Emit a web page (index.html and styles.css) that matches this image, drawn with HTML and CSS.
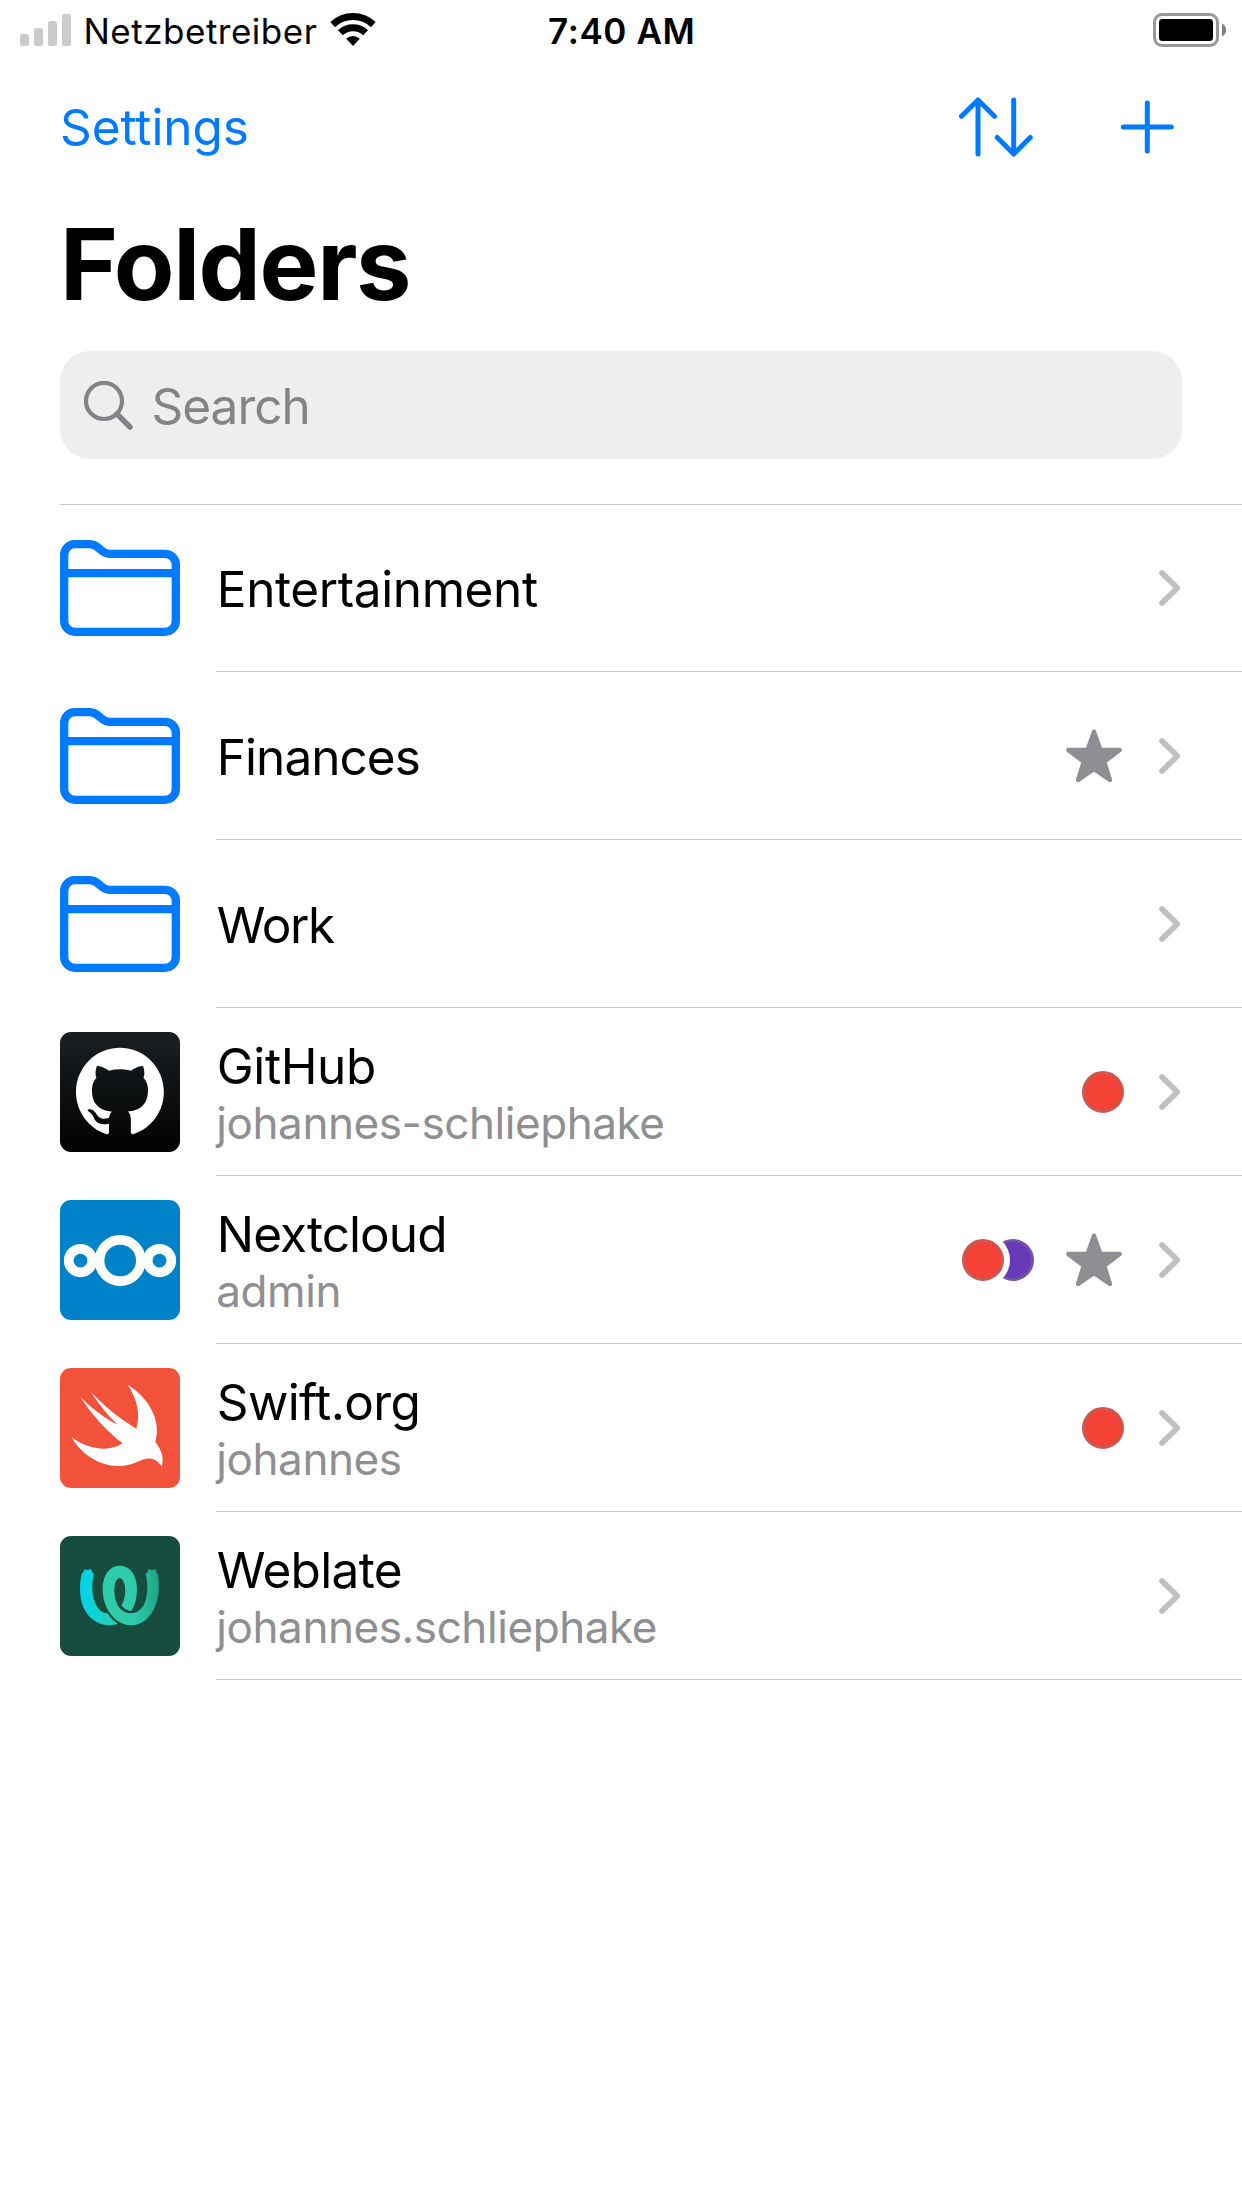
FILE: index.html
```html
<!DOCTYPE html>
<html lang="en">
<head>
<meta charset="utf-8">
<title>Folders</title>
<link rel="stylesheet" href="styles.css">
</head>
<body>
<svg class="defs" aria-hidden="true">
  <symbol id="folder" viewBox="60 24 360 360">
    <path d="M72.500 105A32 32 0 0 1 104.500 72.500H150C180 72.500 178 101.500 209 101.500H375A32.500 32.500 0 0 1 407.500 134V303A32.500 32.500 0 0 1 375 335.500H105A32.500 32.500 0 0 1 72.500 303ZM72.500 159.500H407.500" fill="none" stroke="#007aff" stroke-width="25"/>
  </symbol>
  <symbol id="chevron" viewBox="0 0 22 36">
    <path d="M3 3L18.300 18L3 33" fill="none" stroke="#bfbfbf" stroke-width="5.600" stroke-linecap="round" stroke-linejoin="round"/>
  </symbol>
  <symbol id="star" viewBox="0 0 60 54">
    <path d="M30 2.700L36.300 20.700L55.700 21L40.300 32.800L45.900 51L30 39.900L14.100 51L19.700 32.800L4.300 21L23.700 20.700Z" fill="#8e8e93" stroke="#8e8e93" stroke-width="4.400" stroke-linejoin="round"/>
  </symbol>
</svg>

<header class="status">
  <div class="status-left">
    <svg class="signal" viewBox="0 0 51 32" fill="#cbcbcb"><rect y="20" width="9" height="12" rx="2.500"/><rect x="14" y="14" width="9" height="18" rx="2.500"/><rect x="28" y="7" width="9" height="25" rx="2.500"/><rect x="42" width="9" height="32" rx="2.500"/></svg>
    <span class="carrier">Netzbetreiber</span>
    <svg class="wifi" viewBox="-23 -33 46 33"><path d="M-20.300 -21.400A29.500 29.500 0 0 1 20.300 -21.400M-12.600 -13.300A18.300 18.300 0 0 1 12.600 -13.300" fill="none" stroke="#000" stroke-width="7"/><path d="M0 0L-6.800 -7.200A9.800 9.800 0 0 1 6.800 -7.200Z"/></svg>
  </div>
  <time class="clock">7:40 AM</time>
  <svg class="battery" viewBox="0 0 74 34"><rect x="1.500" y="1.500" width="63" height="31" rx="7.500" fill="none" stroke="#999" stroke-width="3"/><rect x="6" y="6" width="54" height="22" rx="3.500"/><path d="M69 10.500C74.500 13 74.500 21 69 23.500Z" fill="#808080"/></svg>
</header>

<nav class="nav">
  <a class="nav-link">Settings</a>
  <svg class="sort" viewBox="0 0 74 60"><path d="M19 57V3M2.500 19.300L19 3L35.500 19.300M54.700 3V57M38.200 40.500L54.700 57L71.200 40.500"/></svg>
  <svg class="plus" viewBox="0 0 54 54"><path d="M27.300 3V51M3.300 27H51.300"/></svg>
</nav>

<h1 class="title">Folders</h1>

<div class="search">
  <svg class="search-icon" viewBox="0 0 50 50"><circle cx="20" cy="20" r="18"/><path d="M33 33L46 46" stroke-width="5.500"/></svg>
  <span>Search</span>
</div>

<main class="list">
  <section class="row">
    <svg class="icon"><use href="#folder"/></svg>
    <div class="body"><div class="text"><div class="name loose">Entertainment</div></div><svg class="chevron"><use href="#chevron"/></svg></div>
  </section>
  <section class="row">
    <svg class="icon"><use href="#folder"/></svg>
    <div class="body"><div class="text"><div class="name snug">Finances</div></div><svg class="star"><use href="#star"/></svg><svg class="chevron"><use href="#chevron"/></svg></div>
  </section>
  <section class="row">
    <svg class="icon"><use href="#folder"/></svg>
    <div class="body"><div class="text"><div class="name tight">Work</div></div><svg class="chevron"><use href="#chevron"/></svg></div>
  </section>
  <section class="row">
    <svg class="icon tile" viewBox="0 0 120 120">
      <defs><linearGradient id="night" x1="0" y1="0" x2="0" y2="1"><stop stop-color="#1b1f23"/><stop offset="1" stop-color="#010202"/></linearGradient></defs>
      <rect width="120" height="120" fill="url(#night)"/>
      <path transform="translate(16 15.800) scale(.9)" fill="#fff" d="M48.854 0C21.839 0 0 22 0 49.217c0 21.756 13.993 40.172 33.405 46.690 2.427.490 3.316-1.059 3.316-2.362 0-1.141-.080-5.052-.080-9.127-13.590 2.934-16.420-5.867-16.420-5.867-2.184-5.704-5.420-7.170-5.420-7.170-4.448-3.015.324-3.015.324-3.015 4.934.326 7.523 5.052 7.523 5.052 4.367 7.496 11.404 5.378 14.235 4.074.404-3.178 1.699-5.378 3.074-6.600-10.839-1.141-22.243-5.378-22.243-24.283 0-5.378 1.940-9.778 5.014-13.200-.485-1.222-2.184-6.275.486-13.038 0 0 4.125-1.304 13.426 5.052a46.970 46.970 0 0 1 12.214-1.630c4.125 0 8.330.571 12.213 1.630 9.302-6.356 13.427-5.052 13.427-5.052 2.670 6.763.970 11.816.485 13.038 3.155 3.422 5.015 7.822 5.015 13.200 0 18.905-11.404 23.060-22.324 24.283 1.780 1.548 3.316 4.481 3.316 9.126 0 6.600-.080 11.897-.080 13.526 0 1.304.890 2.853 3.316 2.364 19.412-6.520 33.405-24.935 33.405-46.691C97.707 22 75.788 0 48.854 0z"/>
    </svg>
    <div class="body"><div class="text"><div class="name loose">GitHub</div><div class="user">johannes-schliephake</div></div><svg class="dot" viewBox="0 0 42 42"><circle class="red" cx="21" cy="21" r="19.500"/></svg><svg class="chevron"><use href="#chevron"/></svg></div>
  </section>
  <section class="row">
    <svg class="icon tile" viewBox="0 0 120 120">
      <rect width="120" height="120" fill="#0082c9"/>
      <g fill="none" stroke="#fff" stroke-width="9.700"><circle cx="60.200" cy="60.500" r="20.700"/><circle cx="20.500" cy="60.600" r="11.800"/><circle cx="99.500" cy="60.600" r="11.800"/></g>
    </svg>
    <div class="body"><div class="text"><div class="name snug">Nextcloud</div><div class="user">admin</div></div><svg class="dots" viewBox="0 0 72 42"><circle class="purple" cx="51" cy="21" r="19.500"/><circle cx="21" cy="21" r="27" fill="#fff"/><circle class="red" cx="21" cy="21" r="19.500"/></svg><svg class="star"><use href="#star"/></svg><svg class="chevron"><use href="#chevron"/></svg></div>
  </section>
  <section class="row">
    <svg class="icon tile" viewBox="30 24 360 360">
      <rect x="30" y="24" width="360" height="360" fill="#f25239"/>
      <path fill="#fff" d="M233 74C302 118 334 186 316 246C337 272 342 300 335 319C317 291 292 291 268 303C191 341 105 303 65 232C113 269 179 277 218 250C170 214 127 165 91 111C122 142 160 173 203 194C172 166 146 132 123 96C162 139 210 176 259 206C272 166 262 116 233 74Z"/>
    </svg>
    <div class="body"><div class="text"><div class="name">Swift.org</div><div class="user">johannes</div></div><svg class="dot" viewBox="0 0 42 42"><circle class="red" cx="21" cy="21" r="19.500"/></svg><svg class="chevron"><use href="#chevron"/></svg></div>
  </section>
  <section class="row">
    <svg class="icon tile" viewBox="30 24 360 360">
      <defs>
        <linearGradient id="aqua" gradientUnits="userSpaceOnUse" x1="90" y1="0" x2="205" y2="0"><stop stop-color="#00d2e6"/><stop offset=".35" stop-color="#0cd3da"/><stop offset="1" stop-color="#2eccaa"/></linearGradient>
        <linearGradient id="jade" gradientUnits="userSpaceOnUse" x1="158" y1="0" x2="328" y2="0"><stop stop-color="#2eccaa"/><stop offset=".55" stop-color="#2eccaa"/><stop offset="1" stop-color="#1fa385"/></linearGradient>
      </defs>
      <rect x="30" y="24" width="360" height="360" fill="#164d3f"/>
      <path fill="url(#aqua)" d="M103 124Q112 129 122 122Q124 131 132 137C119 186 130 252 173 256Q186 278 204 287C146 306 90 263 90 184Q90 152 96 136Q102 132 103 124Z"/>
      <path fill="url(#jade)" fill-rule="evenodd" d="M296 123Q307 129 317 124Q317 132 323 137C338 214 305 292 243 292C196 292 158 242 158 184C158 143 178 113 209 113C242 113 261 144 261 184Q261 223 244 249Q226 248 214 232C234 204 226 150 209 150C184 150 183 256 243 256C287 256 301 192 287 138Q295 132 296 123Z"/>
    </svg>
    <div class="body"><div class="text"><div class="name">Weblate</div><div class="user">johannes.schliephake</div></div><svg class="chevron"><use href="#chevron"/></svg></div>
  </section>
</main>
</body>
</html>
```
FILE: styles.css
```css
* { box-sizing: border-box; }

body {
  margin: 0;
  background: #fff;
  color: #000;
  font-family: Inter, "Liberation Sans", sans-serif;
  font-size: 49.5px;
  line-height: 60px;
}

svg { display: block; flex: none; }
.defs { display: none; }

/* Status bar */
.status {
  display: grid;
  grid-template-columns: 1fr auto 1fr;
  height: 60px;
  padding: 10px 15px 0 20px;
  font-size: 35px;
  line-height: 42px;
}
.status-left { display: flex; }
.signal { width: 51px; height: 32px; margin-top: 4px; }
.carrier { margin-left: 12.5px; letter-spacing: 0.5px; }
.wifi { width: 46px; height: 33px; margin: 3px 0 0 12.5px; }
.clock { font-weight: 600; letter-spacing: 0.6px; margin-right: 3.5px; }
.battery { width: 74px; height: 34px; margin-top: 3px; justify-self: end; }

/* Navigation bar */
.nav {
  display: flex;
  align-items: center;
  height: 134px;
  padding: 0 68px 0 60px;
}
.nav-link { color: #007aff; letter-spacing: -0.1px; margin-right: auto; }
.sort, .plus {
  fill: none;
  stroke: #007aff;
  stroke-width: 5px;
  stroke-linecap: round;
  stroke-linejoin: round;
}
.sort { width: 74px; height: 60px; }
.plus { width: 54px; height: 54px; margin-left: 87px; }

.title {
  margin: 10px 60px 27px;
  font-size: 99px;
  line-height: 120px;
  font-weight: 700;
  letter-spacing: -1.4px;
}

.search {
  display: flex;
  align-items: center;
  gap: 17.5px;
  height: 108px;
  margin: 0 60px 45px;
  padding: 2px 24px 0;
  border-radius: 30px;
  background: #eeeeef;
  color: #848488;
  letter-spacing: -1px;
}
.search-icon {
  width: 50px;
  height: 50px;
  fill: none;
  stroke: #848488;
  stroke-width: 4.2px;
  stroke-linecap: round;
}

/* List */
.list { margin-left: 60px; box-shadow: inset 0 1px #c6c6c8; }
.row { display: flex; align-items: center; gap: 36px; height: 168px; }
.icon { width: 120px; height: 120px; }
.tile { border-radius: 11px; }
.body {
  display: flex;
  flex: 1;
  align-items: center;
  height: 168px;
  padding-right: 61px;
  box-shadow: inset 0 -1px #c6c6c8;
}
.text { flex: 1; padding-top: 2px; }
.name { margin-left: 0.8px; letter-spacing: -0.65px; }
.name.loose { letter-spacing: -0.4px; }
.name.snug { letter-spacing: -0.95px; }
.name.tight { letter-spacing: -1.4px; }
.user {
  margin-left: 0.3px;
  color: #8e8e93;
  font-size: 44px;
  line-height: 54px;
  letter-spacing: -0.42px;
}

.chevron { width: 22px; height: 36px; margin-left: 35px; }
.star { width: 60px; height: 54px; margin-left: 30px; }
.dot { width: 42px; height: 42px; }
.dots { width: 72px; height: 42px; }
.red { fill: #f44336; stroke: #cb5852; stroke-width: 3px; }
.purple { fill: #673ab7; stroke: #7553a6; stroke-width: 3px; }
```
